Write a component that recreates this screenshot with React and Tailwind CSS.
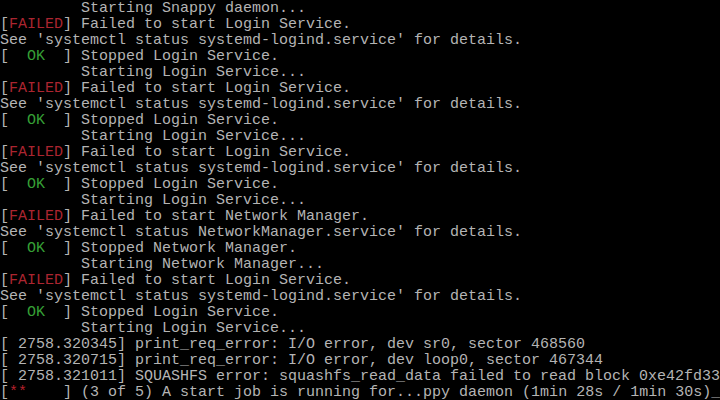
const SEE_LOGIND = "See 'systemctl status systemd-logind.service' for details.";
const SEE_NM = "See 'systemctl status NetworkManager.service' for details.";

// each line: [tag, text]; tag = 'fail' | 'ok' | 'job' | null
const lines = [
  [null, '         Starting Snappy daemon...'],
  ['fail', ' Failed to start Login Service.'],
  [null, SEE_LOGIND],
  ['ok', ' Stopped Login Service.'],
  [null, '         Starting Login Service...'],
  ['fail', ' Failed to start Login Service.'],
  [null, SEE_LOGIND],
  ['ok', ' Stopped Login Service.'],
  [null, '         Starting Login Service...'],
  ['fail', ' Failed to start Login Service.'],
  [null, SEE_LOGIND],
  ['ok', ' Stopped Login Service.'],
  [null, '         Starting Login Service...'],
  ['fail', ' Failed to start Network Manager.'],
  [null, SEE_NM],
  ['ok', ' Stopped Network Manager.'],
  [null, '         Starting Network Manager...'],
  ['fail', ' Failed to start Login Service.'],
  [null, SEE_LOGIND],
  ['ok', ' Stopped Login Service.'],
  [null, '         Starting Login Service...'],
  [null, '[ 2758.320345] print_req_error: I/O error, dev sr0, sector 468560'],
  [null, '[ 2758.320715] print_req_error: I/O error, dev loop0, sector 467344'],
  [null, '[ 2758.321011] SQUASHFS error: squashfs_read_data failed to read block 0xe42fd33'],
  ['job', ' (3 of 5) A start job is running for...ppy daemon (1min 28s / 1min 30s)'],
];

const Tag = ({ kind }) => {
  if (kind === 'fail') {
    return (
      <>
        [<span className="text-[#ab2530]">FAILED</span>]
      </>
    );
  }
  if (kind === 'ok') {
    return (
      <>
        [  <span className="text-[#36a036]">OK</span>  ]
      </>
    );
  }
  if (kind === 'job') {
    return (
      <>
        [<span className="text-[#b8202c]">**</span>    ]
      </>
    );
  }
  return null;
};

export default function App() {
  return (
    <div className="w-[720px] h-[400px] bg-black overflow-hidden pt-px text-[#b4b4b4] font-['Liberation_Mono',monospace] text-[15px] leading-4">
      {lines.map(([kind, text], i) => (
        <div key={i} className="h-4 whitespace-pre">
          <Tag kind={kind} />
          {text}
          {kind === 'job' && <span>_</span>}
        </div>
      ))}
    </div>
  );
}
